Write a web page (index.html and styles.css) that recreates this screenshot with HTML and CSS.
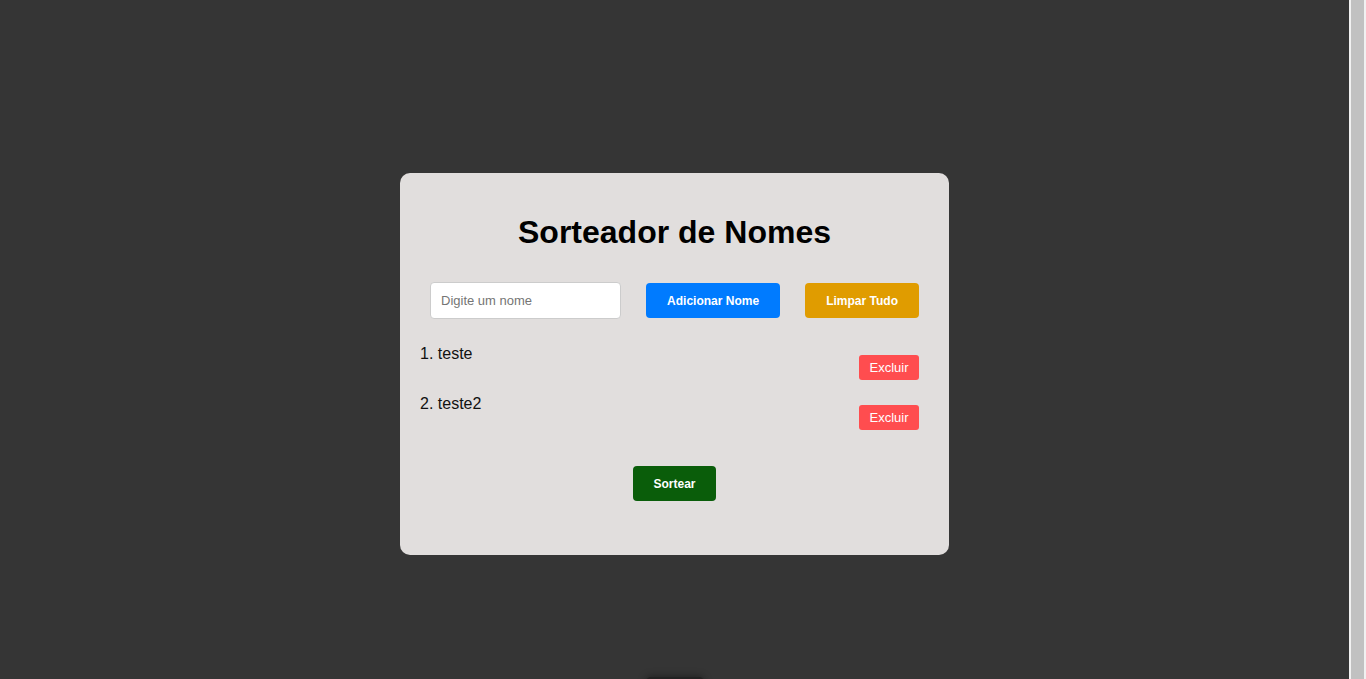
FILE: index.html
```html
<!DOCTYPE html>
<html lang="pt-BR">
<head>
<meta charset="utf-8">
<title>Sorteador de Nomes</title>
<link rel="stylesheet" href="styles.css">
</head>
<body>
  <div class="page">
    <main class="card">
      <h1 class="title">Sorteador de Nomes</h1>
      <div class="controls">
        <input class="name-input" type="text" placeholder="Digite um nome">
        <button class="btn btn-add">Adicionar Nome</button>
        <button class="btn btn-clear">Limpar Tudo</button>
      </div>
      <ol class="names">
        <li class="name-item"><span class="name-text">1. teste</span><button class="btn-del">Excluir</button></li>
        <li class="name-item"><span class="name-text">2. teste2</span><button class="btn-del">Excluir</button></li>
      </ol>
      <div class="draw-row">
        <button class="btn btn-draw">Sortear</button>
      </div>
    </main>
    <div class="result"></div>
  </div>
  <div class="scrollbar"><div class="scroll-thumb"></div></div>
</body>
</html>
```
FILE: styles.css
```css
html, body {
  margin: 0;
  padding: 0;
}
body {
  height: 100vh;
  overflow: hidden;
  background: #353535;
  font-family: "Liberation Sans", Arial, sans-serif;
  display: flex;
}
.page {
  flex: 1;
  display: flex;
  flex-direction: column;
  align-items: center;
}
.scrollbar {
  width: 17px;
  flex: none;
  box-sizing: border-box;
  padding: 0 2px;
  background: #f1f1f1;
  display: flex;
}
.scroll-thumb {
  flex: 1;
  background: #c1c1c1;
}
.card {
  box-sizing: border-box;
  flex: none;
  width: 549px;
  height: 382px;
  margin-top: 173px;
  padding: 20px 30px 0 30px;
  background: #e1dedd;
  border-radius: 10px;
}
.title {
  margin: 21px 0 0 0;
  font-size: 32px;
  font-weight: bold;
  text-align: center;
  color: #000;
  line-height: 37px;
}
.controls {
  margin-top: 31px;
  display: flex;
  align-items: center;
  justify-content: space-between;
}
.name-input {
  box-sizing: border-box;
  width: 191px;
  height: 37px;
  padding: 0 10px;
  border: 1px solid #ccc;
  border-radius: 4px;
  background: #fff;
  font-family: "Liberation Sans", Arial, sans-serif;
  font-size: 13px;
  outline: none;
}
.name-input::placeholder {
  color: #757575;
}
.btn {
  height: 35px;
  padding: 0 21px;
  border: none;
  border-radius: 4px;
  color: #fff;
  font-family: "Liberation Sans", Arial, sans-serif;
  font-size: 12px;
  font-weight: bold;
}
.btn-add { background: #007bff; }
.btn-clear { background: #e09c00; }
.btn-draw { background: #0a5d0a; padding: 0 20.5px; }
.names {
  list-style: none;
  margin: 25px 0 0 -10px;
  padding: 0;
  display: flex;
  flex-direction: column;
  gap: 14px;
}
.name-item {
  display: flex;
  justify-content: space-between;
  align-items: flex-start;
}
.name-text {
  padding-top: 1px;
  font-size: 16px;
  line-height: 18px;
  color: #111;
}
.btn-del {
  margin-top: 11px;
  height: 25px;
  padding: 0 10.5px;
  border: none;
  border-radius: 3px;
  background: #ff4d4f;
  color: #fff;
  font-family: "Liberation Sans", Arial, sans-serif;
  font-size: 13px;
}
.draw-row {
  margin-top: 36px;
  display: flex;
  justify-content: center;
}
.result {
  flex: none;
  width: 58px;
  height: 40px;
  margin-top: 122px;
  background: #222;
  border-radius: 5px;
  box-shadow: 0 0 8px rgba(0, 0, 0, 0.45);
}
```
